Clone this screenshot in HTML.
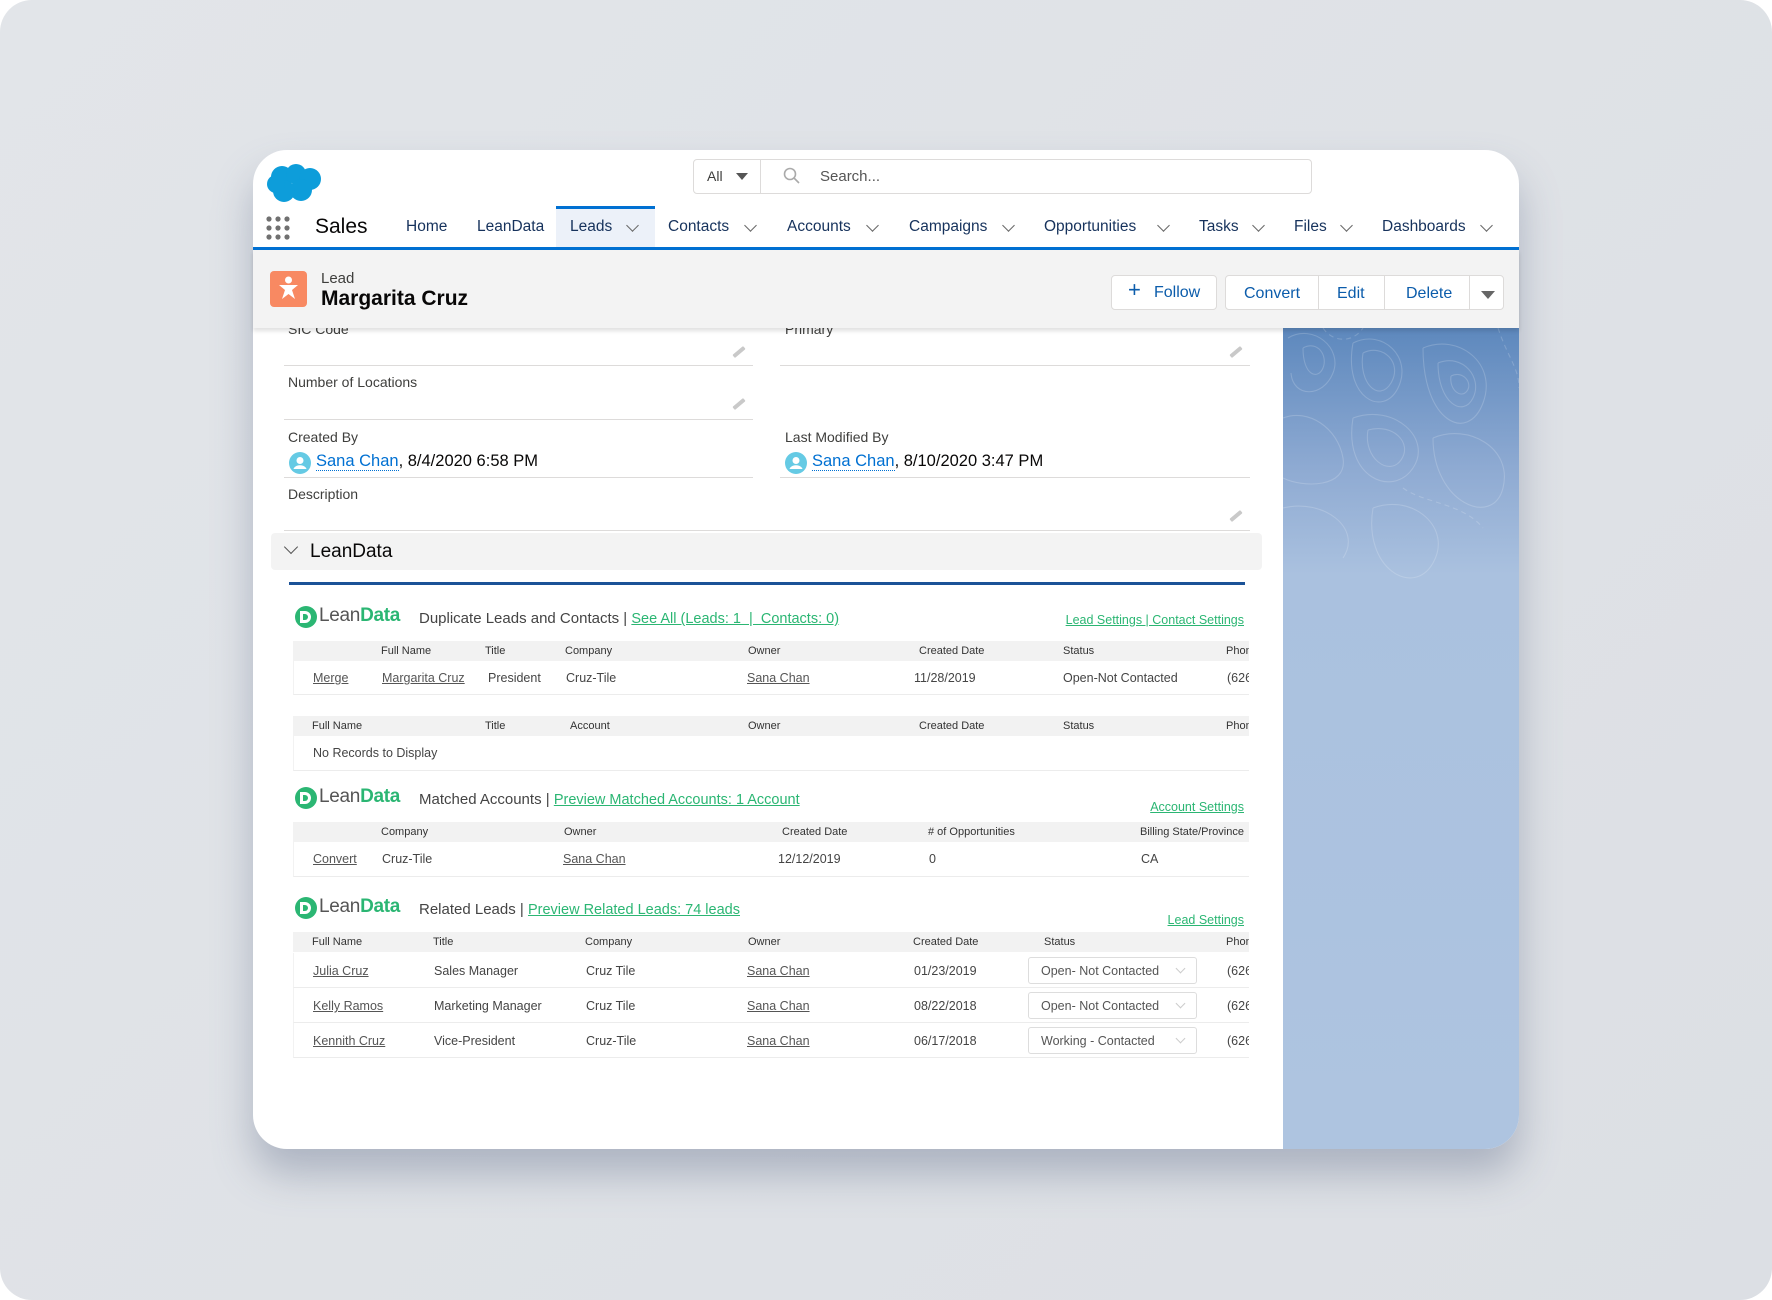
<!DOCTYPE html>
<html><head><meta charset="utf-8"><style>
*{box-sizing:border-box;margin:0;padding:0}
body{width:1772px;height:1300px;background:#fff;font-family:"Liberation Sans",sans-serif;color:#3e3e3c;position:relative;overflow:hidden}
.bg{position:absolute;left:0;top:0;width:1772px;height:1300px;border-radius:32px;background:linear-gradient(135deg,#e2e5e9,#dcdfe4)}
.card{position:absolute;left:253px;top:150px;width:1266px;height:999px;border-radius:34px;background:#fff;overflow:hidden;box-shadow:0 25px 40px rgba(80,95,125,.35)}
.a{position:absolute;white-space:nowrap}
.nav{font-size:15.5px;color:#16325c;top:218px}
.chev{position:absolute;top:221px;width:9px;height:9px;border-right:1.5px solid #666;border-bottom:1.5px solid #666;transform:rotate(45deg)}
.lbl{font-size:14px;color:#3e3e3c}
.line{position:absolute;height:1px;background:#dddbda}
.pen{position:absolute;width:14px;height:4px;background:#c9c9c9;transform:rotate(-40deg);border-radius:1px}
.tbl{position:absolute;left:293px;width:956px;overflow:hidden}
.hd{position:absolute;left:0;width:956px;height:20px;background:#f2f2f2}
.hd span{position:absolute;top:4px;font-size:11px;color:#333;white-space:nowrap}
.rw{position:absolute;left:0;width:956px;border-bottom:1px solid #ececec;border-left:1px solid #f2f2f2}
.rw span{position:absolute;font-size:12.5px;color:#444;white-space:nowrap}
.u{text-decoration:underline;color:#555!important}
.logo{position:absolute;height:24px}
.logo .c{position:absolute;left:0;top:1px;width:22px;height:22px;border-radius:50%;background:#2bb673}
.logo .c i{position:absolute;left:5px;top:5px;width:11px;height:12px;background:#fff;border-radius:0 6px 6px 0}
.logo .c b{position:absolute;left:8px;top:8px;width:5px;height:6px;background:#2bb673;border-radius:0 3px 3px 0}
.logo .t{position:absolute;left:24px;top:0;font-size:19px;color:#555;letter-spacing:-.3px}
.logo .t em{font-style:normal;font-weight:bold;color:#2bb673}
.st{position:absolute;font-size:15px;color:#444;white-space:nowrap}
.gl{color:#2bb673;text-decoration:underline}
.rs{position:absolute;font-size:12.5px;color:#2bb673;text-decoration:underline;white-space:nowrap}
.sel{position:absolute;left:734px;width:169px;height:27px;border:1px solid #ddd;border-radius:3px;font-size:12.5px;color:#555;padding:6px 0 0 12px}
.sel:after{content:"";position:absolute;right:12px;top:7px;width:6px;height:6px;border-right:1px solid #ccc;border-bottom:1px solid #ccc;transform:rotate(45deg)}
</style></head><body>
<div class="bg"></div>
<div class="card"></div>
<div style="position:absolute;left:1283px;top:328px;width:236px;height:821px;border-bottom-right-radius:34px;background:linear-gradient(180deg,#5d88bd 0%,#8eaad2 17%,#aac1df 30%,#aec4e0 100%);overflow:hidden">
<svg width="236" height="260" style="position:absolute;left:0;top:0" fill="none" stroke="rgba(255,255,255,.18)" stroke-width="1.1">
<path d="M5 10 C30 -5 60 20 50 45 S10 70 8 45"/><path d="M20 20 C35 12 45 28 40 40 S20 48 20 20"/>
<path d="M70 15 C100 0 130 30 115 60 S60 70 70 15"/><path d="M80 25 C100 15 120 35 108 55 S75 55 80 25"/>
<path d="M140 20 C175 5 215 35 200 75 S140 95 140 20"/><path d="M155 35 C180 25 200 50 190 70 S155 75 155 35"/><path d="M168 48 C180 42 190 55 184 63 S166 62 168 48"/>
<path d="M0 90 C25 80 55 100 60 130 S20 160 0 150"/><path d="M70 90 C110 75 150 110 130 140 S60 150 70 90"/><path d="M85 102 C110 95 130 115 118 132 S80 130 85 102"/>
<path d="M150 110 C185 95 230 120 220 160 S150 175 150 110"/><path d="M0 180 C40 170 80 200 60 230"/><path d="M90 180 C130 165 170 200 150 235 S80 240 90 180"/>
<path d="M215 0 C225 30 236 40 236 60" stroke-dasharray="5 4"/><path d="M40 0 C50 15 70 15 80 0" stroke-dasharray="5 4"/><path d="M120 160 C140 175 180 175 200 200" stroke-dasharray="5 4"/></svg>
</div>
<svg class="a" style="left:266px;top:162px" width="58" height="42" viewBox="0 0 58 42"><g fill="#0d9dda"><circle cx="16" cy="15" r="11"/><circle cx="30" cy="12" r="10"/><circle cx="44" cy="17" r="11"/><circle cx="35" cy="28" r="11"/><circle cx="18" cy="29" r="11"/><circle cx="10" cy="22" r="9"/></g></svg>
<div class="a" style="left:693px;top:159px;width:619px;height:35px;border:1px solid #dddbda;border-radius:4px"></div>
<div class="a" style="left:760px;top:160px;width:1px;height:33px;background:#dddbda"></div>
<div class="a" style="left:707px;top:168px;font-size:14px;color:#3e3e3c">All</div>
<div class="a" style="left:736px;top:173px;width:0;height:0;border-left:6px solid transparent;border-right:6px solid transparent;border-top:7px solid #555"></div>
<svg class="a" style="left:783px;top:167px" width="18" height="18" viewBox="0 0 18 18" fill="none" stroke="#aaa" stroke-width="1.6"><circle cx="7" cy="7" r="5.5"/><path d="M11 11 L16 16"/></svg>
<div class="a" style="left:820px;top:168px;font-size:15px;color:#555">Search...</div>
<svg class="a" style="left:265px;top:215px" width="26" height="26"><g fill="#707070"><circle cx="4" cy="4" r="2.6"/><circle cx="13" cy="4" r="2.6"/><circle cx="22" cy="4" r="2.6"/><circle cx="4" cy="13" r="2.6"/><circle cx="13" cy="13" r="2.6"/><circle cx="22" cy="13" r="2.6"/><circle cx="4" cy="22" r="2.6"/><circle cx="13" cy="22" r="2.6"/><circle cx="22" cy="22" r="2.6"/></g></svg>
<div class="a" style="left:315px;top:215px;font-size:21px;color:#080707">Sales</div>
<div class="a" style="left:556px;top:206px;width:99px;height:43px;background:#ecf1f9;border-top:3px solid #0070d2"></div>
<div class="a nav" style="left:406px">Home</div>
<div class="a nav" style="left:477px">LeanData</div>
<div class="a nav" style="left:570px">Leads</div><div class="chev" style="left:628px"></div>
<div class="a nav" style="left:668px">Contacts</div><div class="chev" style="left:746px"></div>
<div class="a nav" style="left:787px">Accounts</div><div class="chev" style="left:868px"></div>
<div class="a nav" style="left:909px">Campaigns</div><div class="chev" style="left:1004px"></div>
<div class="a nav" style="left:1044px">Opportunities</div><div class="chev" style="left:1159px"></div>
<div class="a nav" style="left:1199px">Tasks</div><div class="chev" style="left:1254px"></div>
<div class="a nav" style="left:1294px">Files</div><div class="chev" style="left:1342px"></div>
<div class="a nav" style="left:1382px">Dashboards</div><div class="chev" style="left:1482px"></div>
<div class="a" style="left:253px;top:247px;width:1266px;height:3px;background:#0070d2"></div>
<div class="a" style="left:253px;top:250px;width:1266px;height:78px;background:#f3f3f3;box-shadow:0 3px 4px rgba(0,0,0,.12);z-index:2">
 <div class="a" style="left:17px;top:21px;width:37px;height:36px;background:#f88962;border-radius:4px">
  <svg width="37" height="36" viewBox="0 0 37 36"><circle cx="18.5" cy="9" r="3.5" fill="#fff"/><path d="M9 14 H28 L22 19 L25 28 L18.5 23 L12 28 L15 19 Z" fill="#fff"/></svg></div>
 <div class="a" style="left:68px;top:20px;font-size:15px;color:#3e3e3c">Lead</div>
 <div class="a" style="left:68px;top:37px;font-size:21px;font-weight:bold;color:#080707">Margarita Cruz</div>
 <div class="a" style="left:858px;top:25px;width:106px;height:35px;background:#fff;border:1px solid #dddbda;border-radius:4px;font-size:16px;color:#0b5cab;padding:8px 0 0 18px"><span style="font-size:22px;position:absolute;left:16px;top:1px">+</span><span style="margin-left:24px">Follow</span></div>
 <div class="a" style="left:972px;top:25px;width:279px;height:35px;background:#fff;border:1px solid #dddbda;border-radius:4px;font-size:16px;color:#0b5cab">
  <span class="a" style="left:18px;top:9px">Convert</span><span class="a" style="left:92px;top:0;width:1px;height:33px;background:#dddbda"></span>
  <span class="a" style="left:111px;top:9px">Edit</span><span class="a" style="left:158px;top:0;width:1px;height:33px;background:#dddbda"></span>
  <span class="a" style="left:180px;top:9px">Delete</span><span class="a" style="left:243px;top:0;width:1px;height:33px;background:#dddbda"></span>
  <span class="a" style="left:255px;top:15px;width:0;height:0;border-left:7px solid transparent;border-right:7px solid transparent;border-top:8px solid #666"></span></div>
</div>
<div class="a lbl" style="left:288px;top:321px">SIC Code</div>
<div class="a lbl" style="left:785px;top:321px">Primary</div>
<div class="line" style="left:284px;top:365px;width:469px"></div><div class="line" style="left:780px;top:365px;width:470px"></div>
<div class="pen" style="left:732px;top:350px"></div><div class="pen" style="left:1229px;top:350px"></div>
<div class="a lbl" style="left:288px;top:374px">Number of Locations</div>
<div class="pen" style="left:732px;top:402px"></div>
<div class="line" style="left:284px;top:419px;width:469px"></div>
<div class="a lbl" style="left:288px;top:429px">Created By</div>
<div class="a lbl" style="left:785px;top:429px">Last Modified By</div>
<svg class="a" style="left:289px;top:452px" width="22" height="22"><circle cx="11" cy="11" r="11" fill="#65cae4"/><circle cx="11" cy="8.5" r="3.5" fill="#fff"/><path d="M4.5 17 C6 12 16 12 17.5 17 Z" fill="#fff"/></svg>
<div class="a" style="left:316px;top:452px;font-size:16.5px;color:#080707"><span style="color:#0070d2;border-bottom:1px dotted #0070d2">Sana Chan</span>, 8/4/2020 6:58 PM</div>
<svg class="a" style="left:785px;top:452px" width="22" height="22"><circle cx="11" cy="11" r="11" fill="#65cae4"/><circle cx="11" cy="8.5" r="3.5" fill="#fff"/><path d="M4.5 17 C6 12 16 12 17.5 17 Z" fill="#fff"/></svg>
<div class="a" style="left:812px;top:452px;font-size:16.5px;color:#080707"><span style="color:#0070d2;border-bottom:1px dotted #0070d2">Sana Chan</span>, 8/10/2020 3:47 PM</div>
<div class="line" style="left:284px;top:477px;width:469px"></div><div class="line" style="left:780px;top:477px;width:470px"></div>
<div class="a lbl" style="left:288px;top:486px">Description</div>
<div class="pen" style="left:1229px;top:514px"></div>
<div class="line" style="left:284px;top:530px;width:966px"></div>
<div class="a" style="left:271px;top:533px;width:991px;height:37px;background:#f3f3f3;border-radius:4px"></div>
<div class="a" style="left:286px;top:542px;width:10px;height:10px;border-right:1.8px solid #555;border-bottom:1.8px solid #555;transform:rotate(45deg)"></div>
<div class="a" style="left:310px;top:541px;font-size:19px;color:#080707">LeanData</div>
<div class="a" style="left:289px;top:582px;width:956px;height:3px;background:#1b5297"></div>
<div class="logo" style="left:295px;top:605px"><div class="c"><i></i><b></b></div><div class="t">Lean<em>Data</em></div></div>
<div class="st" style="left:419px;top:610px">Duplicate Leads and Contacts | <span class="gl" style="font-size:14.5px">See All (Leads: 1 &nbsp;| &nbsp;Contacts: 0)</span></div>
<div class="rs" style="right:528px;top:613px">Lead Settings | Contact Settings</div>
<div class="tbl" style="top:641px;height:140px">
 <div class="hd" style="top:0"><span style="left:88px">Full Name</span><span style="left:192px">Title</span><span style="left:272px">Company</span><span style="left:455px">Owner</span><span style="left:626px">Created Date</span><span style="left:770px">Status</span><span style="left:933px">Phone</span></div>
 <div class="rw" style="top:20px;height:34px"><span class="u" style="left:19px;top:10px">Merge</span><span class="u" style="left:88px;top:10px">Margarita Cruz</span><span style="left:194px;top:10px">President</span><span style="left:272px;top:10px">Cruz-Tile</span><span class="u" style="left:453px;top:10px">Sana Chan</span><span style="left:620px;top:10px">11/28/2019</span><span style="left:769px;top:10px">Open-Not Contacted</span><span style="left:933px;top:10px">(626</span></div>
 <div class="hd" style="top:75px"><span style="left:19px">Full Name</span><span style="left:192px">Title</span><span style="left:277px">Account</span><span style="left:455px">Owner</span><span style="left:626px">Created Date</span><span style="left:770px">Status</span><span style="left:933px">Phone</span></div>
 <div class="rw" style="top:95px;height:35px"><span style="left:19px;top:10px">No Records to Display</span></div>
</div>
<div class="logo" style="left:295px;top:786px"><div class="c"><i></i><b></b></div><div class="t">Lean<em>Data</em></div></div>
<div class="st" style="left:419px;top:791px">Matched Accounts | <span class="gl" style="font-size:14.5px">Preview Matched Accounts: 1 Account</span></div>
<div class="rs" style="right:528px;top:800px">Account Settings</div>
<div class="tbl" style="top:822px;height:60px">
 <div class="hd" style="top:0"><span style="left:88px">Company</span><span style="left:271px">Owner</span><span style="left:489px">Created Date</span><span style="left:635px"># of Opportunities</span><span style="left:847px">Billing State/Province</span></div>
 <div class="rw" style="top:20px;height:35px"><span class="u" style="left:19px;top:10px">Convert</span><span style="left:88px;top:10px">Cruz-Tile</span><span class="u" style="left:269px;top:10px">Sana Chan</span><span style="left:484px;top:10px">12/12/2019</span><span style="left:635px;top:10px">0</span><span style="left:847px;top:10px">CA</span></div>
</div>
<div class="logo" style="left:295px;top:896px"><div class="c"><i></i><b></b></div><div class="t">Lean<em>Data</em></div></div>
<div class="st" style="left:419px;top:901px">Related Leads | <span class="gl" style="font-size:14.5px">Preview Related Leads: 74 leads</span></div>
<div class="rs" style="right:528px;top:913px">Lead Settings</div>
<div class="tbl" style="top:932px;height:130px">
 <div class="hd" style="top:0"><span style="left:19px">Full Name</span><span style="left:140px">Title</span><span style="left:292px">Company</span><span style="left:455px">Owner</span><span style="left:620px">Created Date</span><span style="left:751px">Status</span><span style="left:933px">Phone</span></div>
 <div class="rw" style="top:21px;height:35px"><span class="u" style="left:19px;top:11px">Julia Cruz</span><span style="left:140px;top:11px">Sales Manager</span><span style="left:292px;top:11px">Cruz Tile</span><span class="u" style="left:453px;top:11px">Sana Chan</span><span style="left:620px;top:11px">01/23/2019</span><div class="sel" style="top:4px">Open- Not Contacted</div><span style="left:933px;top:11px">(626</span></div>
 <div class="rw" style="top:56px;height:35px"><span class="u" style="left:19px;top:11px">Kelly Ramos</span><span style="left:140px;top:11px">Marketing Manager</span><span style="left:292px;top:11px">Cruz Tile</span><span class="u" style="left:453px;top:11px">Sana Chan</span><span style="left:620px;top:11px">08/22/2018</span><div class="sel" style="top:4px">Open- Not Contacted</div><span style="left:933px;top:11px">(626</span></div>
 <div class="rw" style="top:91px;height:35px"><span class="u" style="left:19px;top:11px">Kennith Cruz</span><span style="left:140px;top:11px">Vice-President</span><span style="left:292px;top:11px">Cruz-Tile</span><span class="u" style="left:453px;top:11px">Sana Chan</span><span style="left:620px;top:11px">06/17/2018</span><div class="sel" style="top:4px">Working - Contacted</div><span style="left:933px;top:11px">(626</span></div>
</div>
</body></html>
